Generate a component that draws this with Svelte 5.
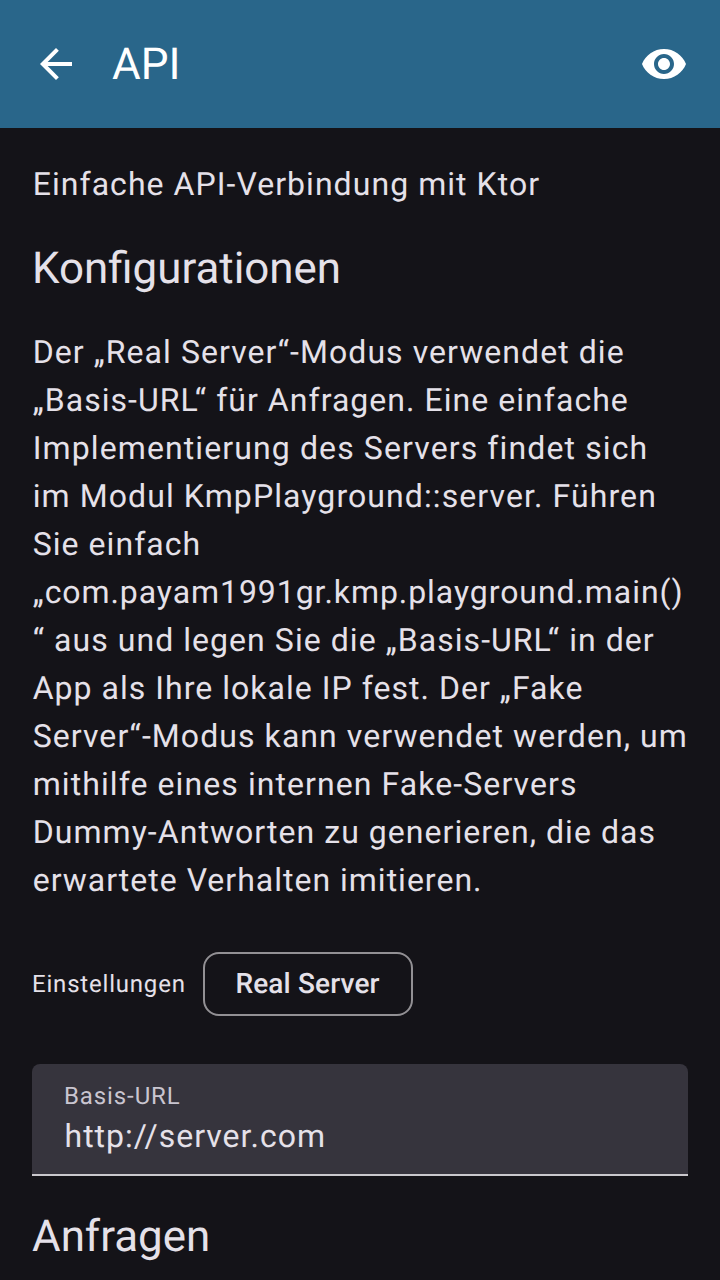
<script>
  // Each line carries its own tracking in pixels.
  const lines = [
    ['Der „Real Server“-Modus verwendet die', 1.06],
    ['„Basis-URL“ für Anfragen. Eine einfache', 1.04],
    ['Implementierung des Servers findet sich', 1.11],
    ['im Modul KmpPlayground::server. Führen', 1.09],
    ['Sie einfach', 1.05],
    ['„com.payam1991gr.kmp.playground.main()', 0.93],
    ['“ aus und legen Sie die „Basis-URL“ in der', 1.05],
    ['App als Ihre lokale IP fest. Der „Fake', 1.03],
    ['Server“-Modus kann verwendet werden, um', 1.07],
    ['mithilfe eines internen Fake-Servers', 1.08],
    ['Dummy-Antworten zu generieren, die das', 1.05],
    ['erwartete Verhalten imitieren.', 1]
  ].map(([text, tracking]) => {
    // Tighten the pair formed by a capital L and a closing quote.
    const at = text.indexOf('L“');
    return at < 0
      ? { before: text, pair: '', after: '', tracking }
      : { before: text.slice(0, at), pair: 'L', after: text.slice(at + 1), tracking };
  });
  let url = 'http://server.com';
</script>

<div class="screen">
  <header>
    <svg class="back" viewBox="0 0 24 24"><path d="M20 11H7.83l5.59-5.59L12 4l-8 8 8 8 1.41-1.41L7.83 13H20v-2z" /></svg>
    <h1>API</h1>
    <svg class="eye" viewBox="0 0 24 24"><path d="M12 4.5C7 4.5 2.73 7.61 1 12c1.73 4.39 6 7.5 11 7.5s9.27-3.11 11-7.5c-1.73-4.39-6-7.5-11-7.5zM12 17c-2.76 0-5-2.24-5-5s2.24-5 5-5 5 2.24 5 5-2.24 5-5 5zm0-8c-1.66 0-3 1.34-3 3s1.34 3 3 3 3-1.34 3-3-1.34-3-3-3z" /></svg>
  </header>
  <main>
    <p class="body">Einfache API-Verbindung mit Ktor</p>
    <h2>Konfigurationen</h2>
    <p class="body">{#each lines as line}<span class="line" style="letter-spacing: {line.tracking}px">{line.before}{#if line.pair}<span class="kern">{line.pair}</span>{/if}{line.after}</span>{/each}</p>
    <div class="settings">
      <span class="label">Einstellungen</span>
      <button>Real Server</button>
    </div>
    <label class="field">
      <span>Basis-URL</span>
      <input type="text" bind:value={url} />
    </label>
    <h2 class="requests">Anfragen</h2>
  </main>
</div>

<style>
  .screen {
    width: 720px;
    height: 1280px;
    overflow: hidden;
    background: #141318;
    color: #e5e1e9;
    font-family: Roboto, sans-serif;
    text-rendering: geometricPrecision;
    font-kerning: normal;
  }
  header {
    display: flex;
    align-items: center;
    height: 128px;
    box-sizing: border-box;
    padding: 0 32px;
    background: #29668a;
    color: #fff;
  }
  svg {
    width: 48px;
    height: 48px;
    fill: currentColor;
  }
  h1 {
    flex: 1;
    margin: 0 0 0 32px;
    font-size: 44px;
    line-height: 56px;
    font-weight: 400;
  }
  main {
    padding: 32px 32px 0;
  }
  p, h2 {
    margin: 0;
    font-weight: 400;
  }
  .body {
    padding-left: 0.7px;
    font-size: 32px;
    line-height: 48px;
    letter-spacing: 1.05px;
    white-space: nowrap;
  }
  .line {
    display: block;
  }
  .kern {
    letter-spacing: -3px;
  }
  h2 {
    margin: 32px 0;
    font-size: 43.9px;
    line-height: 56px;
  }
  .settings {
    display: flex;
    align-items: center;
    gap: 16px;
    margin: 48px 0;
    height: 64px;
  }
  .label {
    width: 155px;
    font-size: 24px;
    line-height: 32px;
    letter-spacing: 0.8px;
  }
  button {
    width: 210px;
    height: 64px;
    padding: 0 1px 0 0;
    background: transparent;
    border: 2px solid #929094;
    border-radius: 16px;
    color: #e5e1e9;
    font: 500 28px/40px Roboto, sans-serif;
    letter-spacing: 0.15px;
    text-rendering: inherit;
  }
  .field {
    display: flex;
    flex-direction: column;
    box-sizing: border-box;
    height: 112px;
    padding: 16px 32px 0;
    background: #36343d;
    border-bottom: 2px solid #cac8cd;
    border-radius: 8px 8px 0 0;
  }
  .field span {
    color: #c9c5d0;
    font-size: 24px;
    line-height: 32px;
    letter-spacing: 0.9px;
  }
  input {
    height: 48px;
    padding: 0 0 0 0.5px;
    border: 0;
    outline: 0;
    background: transparent;
    color: #e5e1e9;
    font: 400 32px/48px Roboto, sans-serif;
    letter-spacing: 1px;
    text-rendering: inherit;
  }
</style>
